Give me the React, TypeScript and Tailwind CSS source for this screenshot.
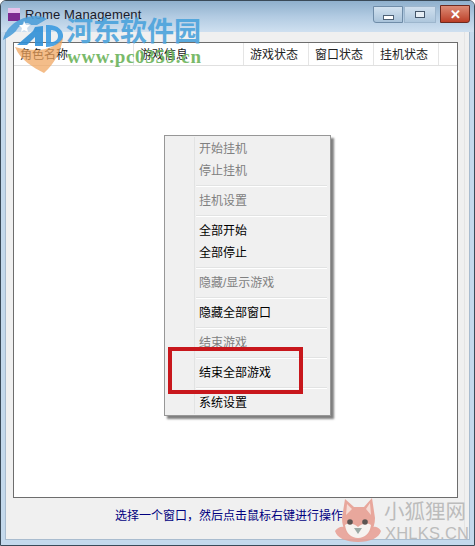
import React from 'react';

const font = { fontFamily: '"Liberation Sans", "Noto Sans CJK SC", sans-serif' };

type Item = { label: string; disabled?: boolean } | 'sep';

const menuItems: Item[] = [
  { label: '开始挂机', disabled: true },
  { label: '停止挂机', disabled: true },
  'sep',
  { label: '挂机设置', disabled: true },
  'sep',
  { label: '全部开始' },
  { label: '全部停止' },
  'sep',
  { label: '隐藏/显示游戏', disabled: true },
  'sep',
  { label: '隐藏全部窗口' },
  'sep',
  { label: '结束游戏', disabled: true },
  'sep',
  { label: '结束全部游戏' },
  'sep',
  { label: '系统设置' },
];

const columns = [
  { label: '角色名称', width: 'w-[120px]' },
  { label: '游戏信息', width: 'w-[110px]' },
  { label: '游戏状态', width: 'w-[65px]' },
  { label: '窗口状态', width: 'w-[65px]' },
  { label: '挂机状态', width: 'w-[65px]' },
];

const ContextMenu: React.FC = () => (
  <div className="absolute left-[163px] top-[134px] w-[167px] h-[281px] bg-[#f0f0f0] border border-[#979797] shadow-[3px_3px_2px_rgba(0,0,0,0.5)] px-[1px] pt-[2px]">
    <div className="absolute left-[29px] top-[1px] bottom-[1px] w-px bg-[#e2e3e3]" />
    {menuItems.map((item, i) =>
      item === 'sep' ? (
        <div key={i} className="h-[8px] flex items-center pl-[30px] pr-[2px]">
          <div className="h-[2px] w-full bg-[#e2e3e3] border-b border-white" />
        </div>
      ) : (
        <div
          key={i}
          className={`h-[22px] pl-[33px] flex items-center text-[12px] leading-none ${item.disabled ? 'text-[#808080]' : 'text-black'}`}
        >
          {item.label}
        </div>
      )
    )}
  </div>
);

const Watermark: React.FC = () => (
  <div className="absolute left-0 top-0 w-[210px] h-[74px] pointer-events-none">
    <svg className="absolute left-0 top-0" width="70" height="74" viewBox="0 0 70 74">
      <path d="M2 39 C5 26 17 16 34 15 C39 15 43 16 46 18 L36 24 L30 24 C26 19 18 24 15 30 C12 33 8 36 2 39 Z" fill="#4f9fd8" opacity="0.9" />
      <path d="M23 20 L25 24 L29 24 L26 27 L27 31 L23 29 L20 31 L21 27 L18 24 L22 24 Z" fill="#ffffff" />
      <path d="M16 44 L32 30 L34 26 L42 25 L42 45 L34 45 L34 36 L26 44 Z" fill="#2f8fd6" opacity="0.9" />
      <path d="M45 24 C56 23 63 29 62 36 C61 42 54 46 45 46 Z M50 29 L50 41 C54 41 57 39 57 35 C57 31 54 29 50 29 Z" fill="#3b9ae0" fillRule="evenodd" opacity="0.9" />
      <path d="M14 46 C20 60 32 66 43 72 C54 62 60 50 62 37 C56 45 46 49 36 49 C28 49 20 48 14 46 Z" fill="#f0a45c" opacity="0.72" />
    </svg>
    <div className="absolute left-[65px] top-[13px] text-[27px] leading-[32px] font-bold text-[#4ba3dc] whitespace-nowrap opacity-90" style={{ fontFamily: '"Noto Sans CJK SC", sans-serif' }}>
      河东软件园
    </div>
    <div className="absolute left-[66px] top-[46px] text-[19px] leading-[20px] font-bold text-[#6cb35a] whitespace-nowrap opacity-90 tracking-[0.7px]" style={{ fontFamily: '"Liberation Serif", serif' }}>
      www.pc0359.cn
    </div>
  </div>
);

const FoxBadge: React.FC = () => (
  <div className="absolute left-[333px] top-[495px] w-[140px] h-[49px] pointer-events-none">
    <svg className="absolute left-0 top-0" width="50" height="48" viewBox="0 0 50 48">
      <path d="M1 35 C5 30 9 30 12 32 L36 32 C40 30 44 30 47 35 C45 42 36 46 24 46 C12 46 3 42 1 35 Z" fill="#e79c92" opacity="0.85" />
      <path d="M11 3 L20 11 L30 11 L38 2 L41 22 C41 34 34 42 24 42 C14 42 8 34 8 22 Z" fill="#e8a79c" />
      <path d="M13 8 L18 13 L12 19 Z M36 7 L32 13 L37 19 Z" fill="#f6dcd6" />
      <path d="M11 29 C16 26 20 28 24 31 C28 28 32 26 37 29 C36 37 31 42 24 42 C17 42 12 37 11 29 Z" fill="#f6f3f0" />
      <circle cx="16" cy="26" r="2.8" fill="#5c5552" />
      <circle cx="31" cy="26" r="2.8" fill="#5c5552" />
      <path d="M20 32 L28 32 L24 38 Z" fill="#9aa9a5" />
    </svg>
    <div className="absolute left-[50px] top-[1px] text-[20.5px] leading-[26px] text-[#bcbcbc] whitespace-nowrap" style={{ fontFamily: '"Noto Sans CJK SC", sans-serif' }}>
      小狐狸网
    </div>
    <div className="absolute left-[51px] top-[28px] text-[16.5px] leading-[19px] text-[#bcbcbc] whitespace-nowrap tracking-[0.2px]" style={{ fontFamily: '"Liberation Sans", sans-serif' }}>
      XHLKS.CN
    </div>
  </div>
);

const App: React.FC = () => {
  return (
    <div className="relative w-[475px] h-[546px] overflow-hidden flex flex-col bg-[#c4d9ec] rounded-t-[6px] border border-[#3a4a58]" style={font}>
      {/* title bar */}
      <div className="h-[31px] shrink-0 flex items-start justify-between pl-[7px] pr-[4px] pt-[4px] bg-gradient-to-b from-[#8fb0cd] via-[#b2cbe2] to-[#cfe0f0]">
        <div className="flex items-center gap-[5px] h-[19px]">
          <div className="w-[12px] h-[13px] bg-[#7d2a90] border-t-[5px] border-[#e6c3ec]" />
          <span className="text-[13px] leading-none text-[#1a1a2a] tracking-[0.15px]">Rome Management</span>
        </div>
        <div className="flex items-start">
          <div className="w-[30px] h-[17px] mt-px mr-px flex items-center justify-center rounded-bl-[3px] border border-[#6f8ca8] bg-gradient-to-b from-[#d3e2f0] to-[#a9c3da]">
            <div className="w-[11px] h-[5px] mt-[5px] bg-white border border-[#4f6276]" />
          </div>
          <div className="w-[32px] h-[17px] mt-px mr-[4px] flex items-center justify-center border border-[#9db6cd] bg-gradient-to-b from-[#cfdfee] to-[#aec7dd]">
            <div className="w-[10px] h-[7px] border border-[#44566a] bg-[#e6eef5]" />
          </div>
          <div className="w-[30px] h-[18px] flex items-center justify-center rounded-br-[3px] border border-[#6d2a20] bg-gradient-to-b from-[#dc8b76] to-[#bb3d26] text-white text-[13px] font-bold leading-none">
            ✕
          </div>
        </div>
      </div>

      {/* client area */}
      <div className="flex-1 flex mx-[4px] mb-[5px] bg-[#f0f0f0] border-x border-b border-[#a9bccf]">
        <div className="flex-1 flex flex-col pl-[7px] pr-[6px] mr-[4px] border-r border-[#e4e4e4] pt-[10px]">
          <div className="h-[456px] flex flex-col bg-white border border-[#6d6d6d]">
            <div className="h-[23px] shrink-0 flex border-b border-[#e0e0e0]">
              {columns.map(col => (
                <div
                  key={col.label}
                  className={`${col.width} shrink-0 pl-[6px] pt-[2px] flex items-center text-[12px] leading-none text-[#222] border-r border-[#e5e5e5]`}
                >
                  {col.label}
                </div>
              ))}
            </div>
            <div className="flex-1" />
          </div>
          <div className="flex-1 flex items-center pl-[102px] pb-[6px] text-[12px] leading-none text-[#00007f] whitespace-nowrap">
            选择一个窗口，然后点击鼠标右键进行操作!
          </div>
        </div>
      </div>

      <ContextMenu />
      <div className="absolute left-[167px] top-[346px] w-[135px] h-[47px] border-[4px] border-[#c8171c]" />
      <Watermark />
      <FoxBadge />
    </div>
  );
};

export default App;
